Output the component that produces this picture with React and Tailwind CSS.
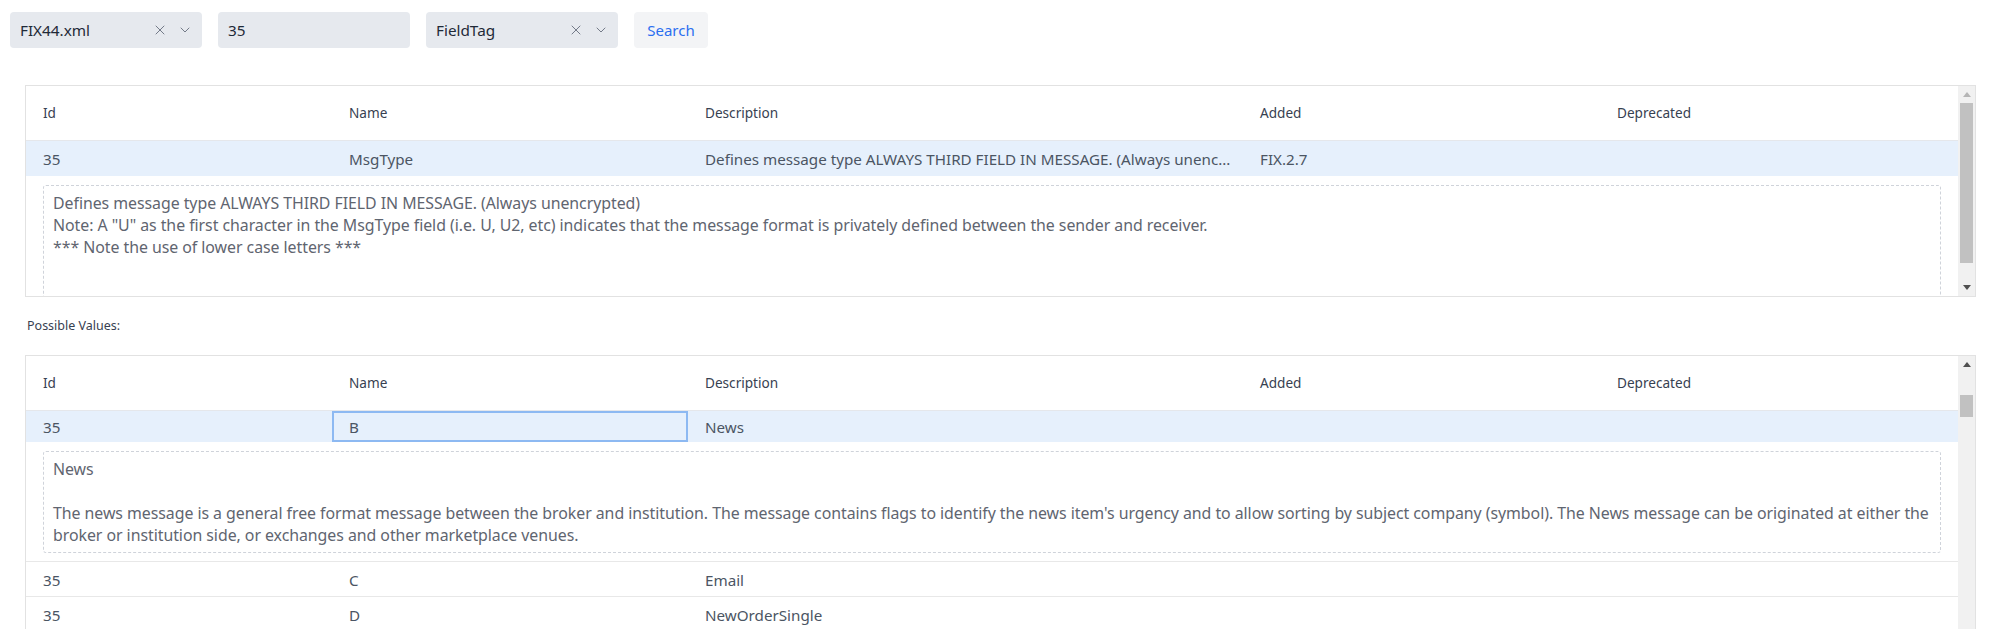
import { X, ChevronDown } from 'lucide-react';

const COLS = 'grid grid-cols-[306px_356px_555px_357px_1fr]';
const HEADERS = ['Id', 'Name', 'Description', 'Added', 'Deprecated'];

const fieldNote = `Defines message type ALWAYS THIRD FIELD IN MESSAGE. (Always unencrypted)
Note: A "U" as the first character in the MsgType field (i.e. U, U2, etc) indicates that the message format is privately defined between the sender and receiver.
*** Note the use of lower case letters ***`;

const newsNote = `News

The news message is a general free format message between the broker and institution. The message contains flags to identify the news item's urgency and to allow sorting by subject company (symbol). The News message can be originated at either the broker or institution side, or exchanges and other marketplace venues.`;

const values = [
  { id: '35', name: 'C', desc: 'Email' },
  { id: '35', name: 'D', desc: 'NewOrderSingle' },
  { id: '35', name: 'E', desc: 'NewOrderList' },
  { id: '35', name: 'F', desc: 'OrderCancelRequest' },
];

function Select({ value }) {
  return (
    <div className="flex items-center w-[192px] h-[36px] rounded-[4px] bg-[#e6e9ee] pl-[10px] pr-[9px]">
      <span className="flex-1 text-[15.3px] text-[#1f2937]">{value}</span>
      <X size={16} strokeWidth={1.4} className="text-[#6b7280]" />
      <ChevronDown size={16} strokeWidth={1.4} className="ml-[9px] text-[#6b7280]" />
    </div>
  );
}

function Header() {
  return (
    <div className={`${COLS} h-[55px] items-center border-b border-[#e5e7eb] text-[13.6px] text-[#374151]`}>
      {HEADERS.map(h => <div key={h} className="pl-[17px]">{h}</div>)}
    </div>
  );
}

function Row({ cells, active, focusCol, height = 'h-[35px]', line }) {
  return (
    <div className={`${COLS} ${height} text-[15.2px] text-[#4b5563] ${active ? 'bg-[#e6f0fc]' : ''} ${line ? 'border-b border-[#e8e8e8]' : ''}`}>
      {cells.map((c, i) => (
        <div key={i}
          className={`flex items-center pl-[17px] pt-[2px] whitespace-nowrap overflow-hidden ${focusCol === i ? 'shadow-[inset_0_0_0_2px_#8db9f2]' : ''}`}>
          {c}
        </div>
      ))}
    </div>
  );
}

function Detail({ text, minH = '', last }) {
  return (
    <div className={`px-[17px] pt-[9px] pb-[8px] ${last ? 'border-b border-[#e8e8e8]' : ''}`}>
      <div className={`border border-dashed border-[#cfd3da] rounded-[3px] px-[9px] pt-[6px] pb-[6px] text-[15.9px] tracking-[-0.05px] leading-[22px] text-[#5f6570] whitespace-pre-line ${minH}`}>
        {text}
      </div>
    </div>
  );
}

function Arrow({ up, color }) {
  return (
    <div className="h-[17px] flex items-center justify-center shrink-0">
      <svg width="8" height="5" viewBox="0 0 8 5">
        <polygon points={up ? '0,5 4,0 8,5' : '0,0 4,5 8,0'} fill={color} />
      </svg>
    </div>
  );
}

function Scrollbar({ thumbTop, thumbH, upColor, showDown = true }) {
  return (
    <div className="w-[17px] shrink-0 bg-[#f1f1f1] flex flex-col">
      <Arrow up color={upColor} />
      <div className="mx-[2px] bg-[#c1c1c1]" style={{ marginTop: thumbTop, height: thumbH }} />
      <div className="flex-1" />
      {showDown && <Arrow color="#505050" />}
    </div>
  );
}

export default function App() {
  return (
    <div className="h-[629px] overflow-hidden bg-white font-['Noto_Sans',sans-serif]">
      {/* search bar */}
      <div className="flex gap-4 pl-[10px] pt-[12px]">
        <Select value="FIX44.xml" />
        <div className="flex items-center w-[192px] h-[36px] rounded-[4px] bg-[#e6e9ee] pl-[10px] text-[15.3px] text-[#1f2937]">35</div>
        <Select value="FieldTag" />
        <button className="w-[74px] h-[36px] rounded-[4px] bg-[#f3f4f6] text-[15px] text-[#2b6ff0]">Search</button>
      </div>

      {/* field table */}
      <div className="mt-[37px] ml-[25px] mr-[14px] h-[212px] border border-[#e2e2e2] flex overflow-hidden">
        <div className="flex-1 min-w-0 overflow-hidden">
          <Header />
          <Row active cells={['35', 'MsgType', 'Defines message type ALWAYS THIRD FIELD IN MESSAGE. (Always unenc...', 'FIX.2.7', '']} />
          <Detail text={fieldNote} minH="min-h-[140px]" />
        </div>
        <Scrollbar thumbTop={0} thumbH={160} upColor="#b5b5b5" />
      </div>

      <div className="ml-[27px] mt-[20px] h-[18px] leading-[18px] text-[12.5px] text-[#374151]">Possible Values:</div>

      {/* values table */}
      <div className="mt-[20px] ml-[25px] mr-[14px] h-[320px] border border-[#e2e2e2] flex overflow-hidden">
        <div className="flex-1 min-w-0 overflow-hidden">
          <Header />
          <Row active focusCol={1} height="h-[31px]" cells={['35', 'B', 'News', '', '']} />
          <Detail text={newsNote} last />
          {values.map(v => (
            <Row key={v.name} line cells={[v.id, v.name, v.desc, '', '']} />
          ))}
        </div>
        <Scrollbar thumbTop={22} thumbH={22} upColor="#505050" showDown={false} />
      </div>
    </div>
  );
}
